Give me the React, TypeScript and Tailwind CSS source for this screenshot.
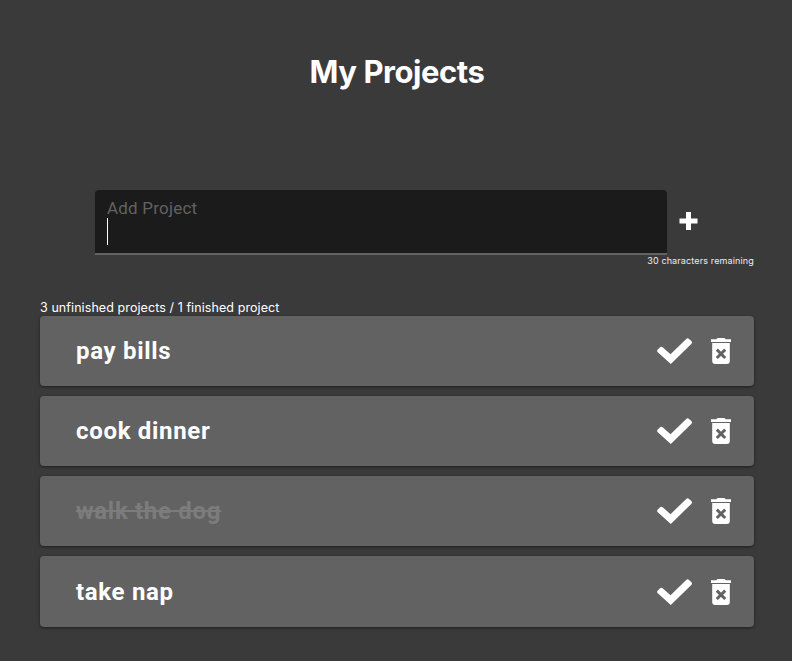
const projects = [
  { name: "pay bills", done: false },
  { name: "cook dinner", done: false },
  { name: "walk the dog", done: true },
  { name: "take nap", done: false },
];

function PlusIcon() {
  return (
    <svg width="19" height="18" viewBox="0 0 19 18" fill="currentColor">
      <path d="M7 0h5v6.5h6.5v5H12V18H7v-6.5H.5v-5H7z" />
    </svg>
  );
}

function CheckIcon() {
  return (
    <svg width="36" height="26" viewBox="0 0 36 26" fill="currentColor">
      <path d="M.8 11.500 3.100 9.300Q4.500 8.200 5.900 9.400L13.500 16.200 29.200.9Q30.600-.3 32 .9L34.300 3.100Q35.700 4.500 34.300 5.900L13.800 26 .8 14.300Q-.6 12.900.8 11.500Z" />
    </svg>
  );
}

function TrashIcon() {
  return (
    <svg width="20" height="26" viewBox="0 0 20 26">
      <path fill="currentColor" d="M0 1.2h5.300L6.500 0h7l1.200 1.200H20V4H0zM1.200 5h17.600V23a3 3 0 0 1-3 3H4.200a3 3 0 0 1-3-3z" />
      <path d="M5.800 11.600l8.400 8.400M14.200 11.600l-8.400 8.400" stroke="#626262" strokeWidth="2.900" />
    </svg>
  );
}

function ProjectRow({ name, done }: { name: string; done: boolean }) {
  return (
    <li className="flex h-[70px] items-center rounded bg-[#626262] pl-9 pr-[23px] shadow-[0_1px_3px_rgba(0,0,0,0.5)] last:h-[71px]">
      <span
        className={
          done
            ? "text-2xl font-bold tracking-[0.69px] text-[#7c7c7c] line-through"
            : "text-2xl font-bold tracking-[0.69px] text-white"
        }
      >
        {name}
      </span>
      <div className="ml-auto flex items-center gap-[18px]">
        <button aria-label="Complete"><CheckIcon /></button>
        <button aria-label="Delete"><TrashIcon /></button>
      </div>
    </li>
  );
}

export default function App() {
  return (
    <main className="h-[661px] overflow-hidden bg-[#3a3a3a] pl-10 pr-[38px] font-['Roboto',sans-serif] text-white">
      <h1 className="pt-[52px] text-center font-['Inter',sans-serif] text-[31px] leading-10 font-[650] tracking-[-0.45px]">
        My Projects
      </h1>
      <form className="mt-[98px] ml-[55px] flex items-center">
        <div className="h-[65px] w-[572px] rounded-t border-b-2 border-[#626262] bg-[#1b1b1b] px-3 pt-[8px]">
          <div className="h-5 text-[17px] leading-5 tracking-[0.2px] text-[#626262]">Add Project</div>
          <div className="h-[27px] w-px bg-white" />
        </div>
        <button type="button" aria-label="Add" className="-mt-1 ml-3"><PlusIcon /></button>
      </form>
      <p className="text-right font-['Inter',sans-serif] text-[9px] leading-3 tracking-[0.14px] text-[#eeeeee]">
        30 characters remaining
      </p>
      <p className="mt-8 font-['Inter',sans-serif] text-[12.5px] leading-[17px] tracking-[0.08px]">
        3 unfinished projects / 1 finished project
      </p>
      <ul className="flex flex-col gap-2.5">
        {projects.map((p) => (
          <ProjectRow key={p.name} name={p.name} done={p.done} />
        ))}
      </ul>
    </main>
  );
}
